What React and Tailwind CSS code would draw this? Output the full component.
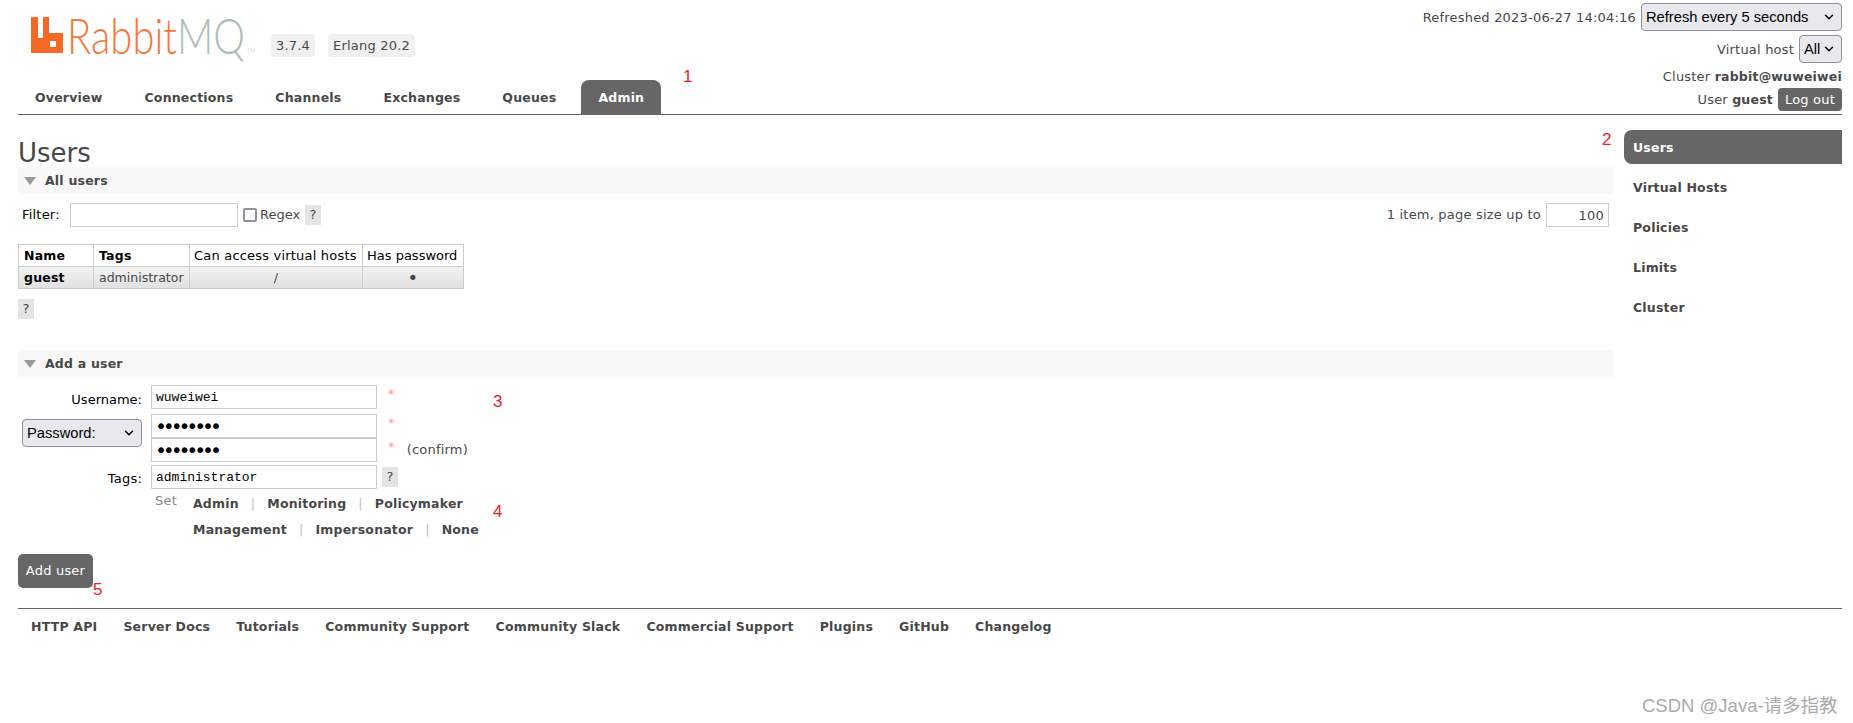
import { ChevronDown } from 'lucide-react'

const tabs = ['Overview', 'Connections', 'Channels', 'Exchanges', 'Queues', 'Admin']
const sideItems = ['Users', 'Virtual Hosts', 'Policies', 'Limits', 'Cluster']
const footerLinks = [
  'HTTP API',
  'Server Docs',
  'Tutorials',
  'Community Support',
  'Community Slack',
  'Commercial Support',
  'Plugins',
  'GitHub',
  'Changelog',
]

const inputClass =
  "h-[24px] w-[226px] border border-[#ccc] bg-white px-[4px] font-['Liberation_Mono',monospace] text-[13px] tracking-normal text-black outline-none"
const passClass =
  "h-[24px] w-[226px] border border-[#ccc] bg-white px-[3px] font-['DejaVu_Sans_Mono',monospace] text-[20px] tracking-[-4.2px] text-black outline-none"

function Logo() {
  return (
    <div className="flex h-[38px] w-[240px] items-start">
      <svg width="32" height="36" viewBox="0 0 32 36" className="mt-[2px] shrink-0">
        <path
          fillRule="evenodd"
          fill="#f46a25"
          d="M0 0h7v21h5V0h6v16h14v20H0zM19 24v6h6v-6z"
        />
      </svg>
      <span className="ml-[4px] origin-left scale-x-[0.8] font-['Lato',sans-serif] text-[50px] leading-[40px] font-light tracking-normal whitespace-nowrap text-[#f4793b]">
        Rabbit<span className="text-[#aebdb6]">MQ</span>
        <span className="ml-[2px] text-[7px] leading-none text-[#c4cdc9]">TM</span>
      </span>
    </div>
  )
}

function Select({ children, className }) {
  return (
    <div className={`relative ${className}`}>
      <select className="h-full w-full appearance-none rounded-[4px] border border-[#8f8f9d] bg-[#e9e9ed] pl-[4px] font-['Liberation_Sans',sans-serif] text-[14.7px] tracking-normal text-black">
        {children}
      </select>
      <ChevronDown className="pointer-events-none absolute top-1/2 right-[6px] h-[14px] w-[14px] -translate-y-1/2 text-black" strokeWidth={2.5} />
    </div>
  )
}

function Help({ className = '' }) {
  return (
    <span className={`flex h-[20px] w-[16px] items-center justify-center bg-[#e4e4e4] text-[#484848] ${className}`}>?</span>
  )
}

function SectionHead({ title }) {
  return (
    <div className="flex h-[27px] items-center bg-[#f8f8f8] pt-[1px] pl-[6px] text-[12.5px] font-bold">
      <svg width="12" height="8" viewBox="0 0 12 8" className="mr-[9px]">
        <path d="M0 0h12L6 8z" fill="#999" />
      </svg>
      {title}
    </div>
  )
}

function Star() {
  return <span className="ml-[11px] -translate-y-[3px] text-[#f99]">*</span>
}

function Sep() {
  return <span className="mx-[12px] font-normal text-[#bbb]">|</span>
}

export default function App() {
  return (
    <div className="relative h-[723px] overflow-hidden bg-white pr-[11px] pl-[18px] font-['DejaVu_Sans',sans-serif] text-[13px] tracking-[0.2px] text-[#484848]">
      {/* Header */}
      <div className="flex h-[115px] justify-between border-b border-[#666]">
        <div className="flex flex-col">
          <div className="flex h-[80px] pt-[15px] pl-[13px]">
            <Logo />
            <div className="mt-[19px] flex h-[23px] gap-[13px]">
              <span className="flex items-center rounded-[4px] bg-[#f0f0f0] px-[5px]">3.7.4</span>
              <span className="flex items-center rounded-[4px] bg-[#f0f0f0] px-[5px]">Erlang 20.2</span>
            </div>
          </div>
          <div className="flex h-[34px] gap-[8px] text-[12.5px]">
            {tabs.map((t) => (
              <a
                key={t}
                className={`flex items-center rounded-t-[8px] px-[17px] pt-[2px] font-bold ${t === 'Admin' ? 'bg-[#666] text-white' : ''}`}
              >
                {t}
              </a>
            ))}
          </div>
        </div>

        <div className="flex flex-col items-end pt-[3px]">
          <div className="flex h-[28px] items-center gap-[5px]">
            <span className="pt-[1px]">Refreshed 2023-06-27 14:04:16</span>
            <Select className="h-[28px] w-[201px]">
              <option>Refresh every 5 seconds</option>
            </Select>
          </div>
          <div className="mt-[4px] flex h-[28px] items-center gap-[5px]">
            <span className="pt-[2px]">Virtual host</span>
            <Select className="h-[28px] w-[43px]">
              <option>All</option>
            </Select>
          </div>
          <div className="mt-[2px] flex h-[23px] items-center">
            <span>
              Cluster <b className="text-[12.5px]">rabbit@wuweiwei</b>
            </span>
          </div>
          <div className="flex h-[23px] items-center gap-[5px]">
            <span>
              User <b className="text-[12.5px]">guest</b>
            </span>
            <button className="h-[23px] rounded-[4px] bg-[#666] px-[7px] text-white">Log out</button>
          </div>
        </div>
      </div>

      <div className="flex">
        {/* Main column */}
        <div className="w-[1595px]">
          <h1 className="pt-[24px] text-[26px] leading-[28px] font-normal tracking-normal">Users</h1>
          <SectionHead title="All users" />

          <div className="mt-[9px] flex h-[24px] items-center pr-[4px]">
            <span className="ml-[4px] w-[48px] text-black">Filter:</span>
            <input className="h-[24px] w-[168px] border border-[#ccc] bg-white outline-none" />
            <span className="mr-[3px] ml-[5px] h-[14px] w-[14px] rounded-[2px] border-2 border-[#8f8f9d] bg-white" />
            <span className="tracking-normal">Regex</span>
            <Help className="ml-[5px]" />
            <span className="mr-[5px] ml-auto">1 item, page size up to</span>
            <input
              defaultValue="100"
              className="h-[24px] w-[63px] border border-[#ccc] bg-white px-[4px] text-right text-[#484848] outline-none"
            />
          </div>

          <table className="mt-[17px] w-[445px] table-fixed border-collapse border border-[#ccc] text-left">
            <colgroup>
              <col className="w-[75px]" />
              <col className="w-[96px]" />
              <col className="w-[173px]" />
              <col className="w-[101px]" />
            </colgroup>
            <thead>
              <tr className="h-[22px]">
                <th className="border border-[#ccc] px-[5px] pt-[1px] text-[12.5px] font-bold text-black">Name</th>
                <th className="border border-[#ccc] px-[5px] pt-[1px] text-[12.5px] font-bold text-black">Tags</th>
                <th className="border border-[#ccc] px-[4px] pt-[1px] font-normal whitespace-nowrap text-black">Can access virtual hosts</th>
                <th className="border border-[#ccc] px-[4px] pt-[1px] font-normal tracking-normal whitespace-nowrap text-black">Has password</th>
              </tr>
            </thead>
            <tbody>
              <tr className="h-[22px] bg-linear-to-b from-[#f2f2f2] to-[#e0e0e0]">
                <td className="border border-[#ccc] px-[5px] pt-[1px] text-[12.5px] font-bold text-black">guest</td>
                <td className="border border-[#ccc] px-[5px] pt-[1px] text-[12.5px] tracking-normal">administrator</td>
                <td className="border border-[#ccc] px-[5px] pt-[1px] text-center">/</td>
                <td className="border border-[#ccc] px-[5px] pt-[1px] text-center text-[18px] leading-none">•</td>
              </tr>
            </tbody>
          </table>

          <Help className="mt-[10px]" />

          <div className="mt-[31px]">
            <SectionHead title="Add a user" />
          </div>

          {/* Add a user form */}
          <div className="mt-[8px] flex flex-col">
            <div className="flex h-[24px] items-center">
              <label className="w-[124px] pt-[5px] text-right tracking-normal text-black">Username:</label>
              <input defaultValue="wuweiwei" className={`ml-[9px] ${inputClass}`} />
              <Star />
            </div>

            <div className="mt-[5px] flex">
              <div className="flex w-[124px] items-start justify-end pt-[5px]">
                <Select className="h-[28px] w-[120px]">
                  <option>Password:</option>
                </Select>
              </div>
              <div className="ml-[9px] flex flex-col">
                <div className="flex items-center">
                  <input type="password" defaultValue="wuweiwei" className={passClass} />
                  <Star />
                </div>
                <div className="flex items-center">
                  <input type="password" defaultValue="wuweiwei" className={passClass} />
                  <Star />
                  <span className="ml-[12px]">(confirm)</span>
                </div>
              </div>
            </div>

            <div className="mt-[3px] flex h-[24px] items-center">
              <label className="w-[124px] pt-[4px] text-right text-black">Tags:</label>
              <input defaultValue="administrator" className={`ml-[9px] ${inputClass}`} />
              <Help className="ml-[5px]" />
            </div>

            <div className="mt-[2px] flex pl-[133px]">
              <span className="mt-[3px] w-[42px] pl-[4px] leading-[14px] text-[#888]">Set</span>
              <div className="text-[12.5px]">
                <div className="flex h-[26px] items-center font-bold">
                  Admin<Sep />Monitoring<Sep />Policymaker
                </div>
                <div className="flex h-[26px] items-center font-bold">
                  Management<Sep />Impersonator<Sep />None
                </div>
              </div>
            </div>
          </div>

          <button className="mt-[11px] h-[34px] w-[75px] rounded-[5px] bg-[#666] text-white">Add user</button>
        </div>

        {/* Side nav */}
        <div className="ml-[11px] flex w-[218px] flex-col gap-[6px] pt-[15px] text-[12.5px]">
          {sideItems.map((s) => (
            <a
              key={s}
              className={`flex h-[34px] items-center rounded-l-[8px] pt-[2px] pl-[9px] font-bold ${s === 'Users' ? 'bg-[#666] text-white' : ''}`}
            >
              {s}
            </a>
          ))}
        </div>
      </div>

      {/* Footer */}
      <div className="mt-[20px] flex h-[38px] items-center gap-[26px] border-t border-[#666] pl-[13px] text-[12.5px] font-bold">
        {footerLinks.map((l) => (
          <a key={l}>{l}</a>
        ))}
      </div>

      {/* Annotations on top of the screenshot */}
      <span className="absolute top-[64px] left-[683px] font-['Liberation_Sans',sans-serif] text-[17px] text-[#e8212f]">1</span>
      <span className="absolute top-[127px] left-[1602px] font-['Liberation_Sans',sans-serif] text-[17px] text-[#e8212f]">2</span>
      <span className="absolute top-[389px] left-[493px] font-['Liberation_Sans',sans-serif] text-[17px] text-[#e8212f]">3</span>
      <span className="absolute top-[499px] left-[493px] font-['Liberation_Sans',sans-serif] text-[17px] text-[#e8212f]">4</span>
      <span className="absolute top-[577px] left-[93px] font-['Liberation_Sans',sans-serif] text-[17px] text-[#e8212f]">5</span>
      <span className="absolute top-[692px] left-[1642px] font-['Liberation_Sans','Noto_Sans_CJK_SC',sans-serif] text-[18.5px] tracking-normal whitespace-nowrap text-[#aaa]">
        CSDN @Java-请多指教
      </span>
    </div>
  )
}
